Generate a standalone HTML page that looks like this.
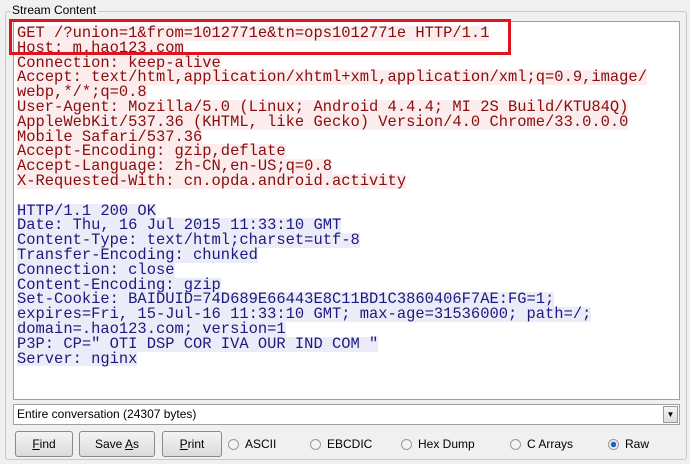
<!DOCTYPE html><html><head><style>
body{margin:0;width:690px;height:464px;background:#f0f0f0;font-family:"Liberation Sans",sans-serif;position:relative;overflow:hidden}
.fs{position:absolute;left:5px;top:11px;width:680px;height:447px;border:1px solid #c8c8c8;border-radius:3px}
.lg{position:absolute;left:10px;top:3px;background:#f0f0f0;font-size:12px;padding:0 2px;color:#000}
.ta{position:absolute;left:13px;top:21px;width:667px;height:379px;background:#fff;border:1px solid #a0a0a0;box-sizing:border-box}
pre{margin:0;position:absolute;left:3px;top:4px;font-family:"Liberation Mono",monospace;font-size:15.45px;line-height:14.8px}
pre span{display:inline-block;height:14.8px;vertical-align:top}
.r span{background:#fbeded;color:#8a0c0c}
.b span{background:#ececf8;color:#1a1a80}
.box{position:absolute;left:9px;top:19px;width:502px;height:36px;border:3px solid #e0141e;box-sizing:border-box}
.sel{position:absolute;left:13px;top:404px;width:667px;height:21px;background:#fff;border:1px solid #a0a0a0;box-sizing:border-box;font-size:12px;line-height:19px;padding-left:3px}
.dd{position:absolute;right:1px;top:1px;width:15px;height:17px;border:1px solid #999;background:linear-gradient(#f6f6f6,#dcdcdc);box-sizing:border-box;font-size:8px;text-align:center;line-height:15px}
.btn{position:absolute;top:431px;height:26px;border:1px solid #8a8a8a;border-radius:3px;background:linear-gradient(#f4f4f4,#dcdcdc);box-sizing:border-box;font-size:12px;text-align:center;line-height:24px}
.rad{position:absolute;top:437px;font-size:12px;line-height:14px}
.rad i{display:inline-block;width:11px;height:11px;border:1px solid #999;border-radius:50%;background:#f4f4f4;vertical-align:-2px;margin-right:6px;box-sizing:border-box}
.rad i.on{background:radial-gradient(#2060c0 2.5px,#f4f4f4 3px)}
</style></head><body>
<div class="fs"></div><div class="lg">Stream Content</div>
<div class="ta"><pre><div class="r"><span>GET /?union=1&amp;from=1012771e&amp;tn=ops1012771e HTTP/1.1</span>
<span>Host: m.hao123.com</span>
<span>Connection: keep-alive</span>
<span>Accept: text/html,application/xhtml+xml,application/xml;q=0.9,image/</span>
<span>webp,*/*;q=0.8</span>
<span>User-Agent: Mozilla/5.0 (Linux; Android 4.4.4; MI 2S Build/KTU84Q)</span>
<span>AppleWebKit/537.36 (KHTML, like Gecko) Version/4.0 Chrome/33.0.0.0</span>
<span>Mobile Safari/537.36</span>
<span>Accept-Encoding: gzip,deflate</span>
<span>Accept-Language: zh-CN,en-US;q=0.8</span>
<span>X-Requested-With: cn.opda.android.activity</span>
</div>
<div class="b"><span>HTTP/1.1 200 OK</span>
<span>Date: Thu, 16 Jul 2015 11:33:10 GMT</span>
<span>Content-Type: text/html;charset=utf-8</span>
<span>Transfer-Encoding: chunked</span>
<span>Connection: close</span>
<span>Content-Encoding: gzip</span>
<span>Set-Cookie: BAIDUID=74D689E66443E8C11BD1C3860406F7AE:FG=1;</span>
<span>expires=Fri, 15-Jul-16 11:33:10 GMT; max-age=31536000; path=/;</span>
<span>domain=.hao123.com; version=1</span>
<span>P3P: CP=" OTI DSP COR IVA OUR IND COM "</span>
<span>Server: nginx</span></div></pre></div>
<div class="box"></div>
<div class="sel">Entire conversation (24307 bytes)<div class="dd">▼</div></div>
<div class="btn" style="left:15px;width:58px"><u>F</u>ind</div>
<div class="btn" style="left:79px;width:76px">Save <u>A</u>s</div>
<div class="btn" style="left:162px;width:60px"><u>P</u>rint</div>
<div class="rad" style="left:228px"><i></i>ASCII</div>
<div class="rad" style="left:310px"><i></i>EBCDIC</div>
<div class="rad" style="left:401px"><i></i>Hex Dump</div>
<div class="rad" style="left:510px"><i></i>C Arrays</div>
<div class="rad" style="left:608px"><i class="on"></i>Raw</div>
</body></html>
